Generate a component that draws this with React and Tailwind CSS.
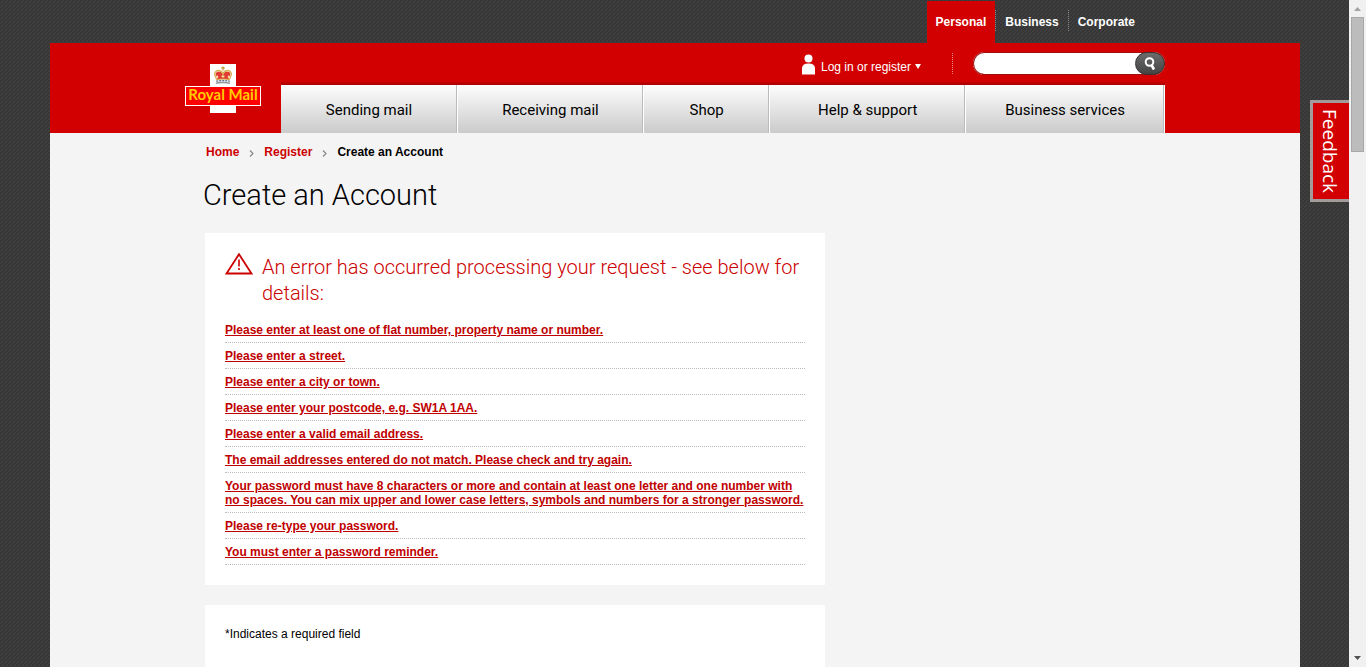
import React from "react";

const sites = [
  { name: "Personal", active: true },
  { name: "Business" },
  { name: "Corporate" },
];

const sections = [
  { name: "Sending mail", size: "grow-[177]" },
  { name: "Receiving mail", size: "grow-[186]" },
  { name: "Shop", size: "grow-[126]" },
  { name: "Help & support", size: "grow-[196]" },
  { name: "Business services", size: "grow-[199]" },
];

const errors = [
  "Please enter at least one of flat number, property name or number.",
  "Please enter a street.",
  "Please enter a city or town.",
  "Please enter your postcode, e.g. SW1A 1AA.",
  "Please enter a valid email address.",
  "The email addresses entered do not match. Please check and try again.",
  "Your password must have 8 characters or more and contain at least one letter and one number with no spaces. You can mix upper and lower case letters, symbols and numbers for a stronger password.",
  "Please re-type your password.",
  "You must enter a password reminder.",
];

function Logo() {
  return (
    <svg width="76" height="49" viewBox="0 0 76 49" aria-label="Royal Mail" role="img">
      <rect x="25" y="0" width="26" height="49" fill="#fff" />
      <g>
        <path d="M38 2.500 V6.500 M36.300 4 H39.700" stroke="#c9973a" strokeWidth="1.300" />
        <path d="M31.500 15 L30.500 10 Q31 7.500 33.500 7.500 Q36 7.500 38 9.500 Q40 7.500 42.500 7.500 Q45 7.500 45.500 10 L44.500 15 Z" fill="#e23b34" />
        <path d="M31.500 15 L29.500 10.500 Q30 6.300 34 6.500 Q37.200 7 38 10 Q38.800 7 42 6.500 Q46 6.300 46.500 10.500 L44.500 15 M38 8 V14" fill="none" stroke="#dcb158" strokeWidth="1.300" />
        <path d="M31 12.800 H33.200 M32.100 11.500 V14.500 M36.500 12.300 H39.500 M42.800 12.800 H45 M43.900 11.500 V14.500" stroke="#f8e9b0" strokeWidth="1.200" />
        <path d="M31 15.800 Q38 14.200 45 15.800" fill="none" stroke="#d9a545" strokeWidth="1.200" />
        <path d="M31.300 17.300 Q38 15.700 44.700 17.300" fill="none" stroke="#5a6f96" strokeWidth="1.300" strokeDasharray="2 1" />
        <path d="M31 19.200 Q38 17.600 45 19.200" fill="none" stroke="#9a9da0" strokeWidth="1.600" />
      </g>
      <rect x="0.500" y="22.500" width="75" height="19" fill="#f00" stroke="#fff" />
      <text x="38" y="36" textAnchor="middle" fill="#fc0" className="font-['Lato',sans-serif] text-[15px] font-bold">
        Royal Mail
      </text>
    </svg>
  );
}

function TopBar() {
  return (
    <nav aria-label="Sites" className="mx-auto flex h-[43px] max-w-[980px] justify-end pt-px pr-[21px] text-xs font-bold text-white">
      {sites.map((s, i) => (
        <div key={s.name} className={s.active ? "flex bg-[#d20000]" : "flex"}>
          {i > 0 && <span className="mt-[9px] h-[21px] border-l border-dotted border-[#8a8a8a]" />}
          <a href="#" className="px-[9px] pt-[13px] leading-4">{s.name}</a>
        </div>
      ))}
    </nav>
  );
}

function Utilities() {
  return (
    <div className="flex h-[42px] items-start justify-end bg-[linear-gradient(to_top,#a80000,#d20000_4px)] pt-[9px]">
      <a href="#" className="mt-px flex items-center text-xs leading-4 text-white">
        <svg width="13" height="21" viewBox="0 0 13 21" fill="#fff" className="mr-1.5">
          <circle cx="6.500" cy="4.500" r="4" />
          <path d="M0 20.500 V14.500 Q0 9.500 6.500 9.500 Q13 9.500 13 14.500 V20.500 Z" />
        </svg>
        <span className="mt-1.5">Log in or register</span>
        <svg width="6" height="5" viewBox="0 0 6 5" fill="#fff" className="mt-1 ml-1">
          <path d="M0 0 H6 L3 5 Z" />
        </svg>
      </a>
      <span className="mr-5 ml-[31px] mt-px h-[21px] border-l border-dotted border-[#e88]" />
      <form className="flex h-[23px] w-48 overflow-hidden rounded-full bg-white shadow-[inset_0_0_0_1px_#a01010]">
        <input aria-label="Search" type="text" className="min-w-0 grow bg-transparent px-3 text-xs outline-none" />
        <button type="button" aria-label="Search" className="flex w-[30px] shrink-0 items-center justify-center rounded-full border border-[#3a3030] bg-linear-to-b from-[#6c6c6c] to-[#444]">
          <svg width="12" height="14" viewBox="0 0 12 14" fill="none" stroke="#fff" strokeWidth="2">
            <circle cx="5.500" cy="5" r="3.800" />
            <path d="M7.500 8 L10 12.500" strokeWidth="2.600" />
          </svg>
        </button>
      </form>
    </div>
  );
}

function Header() {
  return (
    <header className="bg-[#d20000]">
      <div className="mx-auto flex max-w-[980px]">
        <a href="#" className="mt-[21px] mr-5 shrink-0"><Logo /></a>
        <div className="grow">
          <Utilities />
          <nav aria-label="Main" className="flex h-12">
            {sections.map((s) => (
              <a
                key={s.name}
                href="#"
                className={`${s.size} flex basis-0 items-center justify-center border-r border-white bg-linear-to-b from-[#fdfdfd] to-[#cbcbcb] pt-[3px] font-['Roboto',sans-serif] text-[15px] text-black shadow-[inset_-1px_0_0_#bbb]`}
              >
                {s.name}
              </a>
            ))}
          </nav>
        </div>
      </div>
    </header>
  );
}

function Breadcrumb() {
  const chevron = (
    <svg width="5" height="7" viewBox="0 0 5 7" fill="none" stroke="#888" strokeWidth="1.200" className="mt-0.5">
      <path d="M1 0.500 L4 3.500 L1 6.500" />
    </svg>
  );
  return (
    <nav aria-label="Breadcrumb" className="flex items-center gap-2.5 pl-[21px] pt-[11px] text-xs leading-4 font-bold">
      <a href="#" className="text-[#cc0000]">Home</a>
      {chevron}
      <a href="#" className="text-[#cc0000]">Register</a>
      {chevron}
      <span>Create an Account</span>
    </nav>
  );
}

function ErrorPanel() {
  return (
    <section className="bg-white p-5">
      <div className="flex gap-[9px] text-[#cc0000]">
        <svg width="28" height="22" viewBox="0 0 28 22" fill="none" stroke="#c00" className="shrink-0">
          <path d="M14 1.200 L26.500 20.500 H1.500 Z" strokeWidth="1.800" />
          <path d="M14 6.500 V13.500 M14 15 V17" strokeWidth="1.600" />
        </svg>
        <h2 className="pt-px font-['Roboto',sans-serif] text-[20px] leading-[26px] font-light">
          An error has occurred processing your request - see below for details:
        </h2>
      </div>
      <ul className="mt-[11px] text-xs leading-[14px] font-bold">
        {errors.map((e) => (
          <li key={e} className="border-b border-dotted border-[#bbb] pt-1.5 pb-[5px]">
            <a href="#" className="text-[#c00000] underline">{e}</a>
          </li>
        ))}
      </ul>
    </section>
  );
}

function Scrollbar() {
  return (
    <div aria-hidden="true" className="flex w-[17px] shrink-0 flex-col items-center bg-[#f1f1f1]">
      <svg width="7" height="4" viewBox="0 0 7 4" fill="#a3a3a3" className="mt-[7px]">
        <path d="M3.500 0 L7 4 H0 Z" />
      </svg>
      <div className="mt-1.5 h-[135px] w-[13px] border border-[#a8a8a8] bg-[#bcbcbc]" />
      <svg width="7" height="4" viewBox="0 0 7 4" fill="#505050" className="mt-auto mb-[7px]">
        <path d="M0 0 H7 L3.500 4 Z" />
      </svg>
    </div>
  );
}

export default function App() {
  return (
    <div className="flex h-screen overflow-hidden bg-[#393939] bg-[linear-gradient(135deg,#363636_25%,#404040_50%,#363636_75%)] bg-[length:4px_4px] font-['Liberation_Sans',Arial,sans-serif] text-black">
      <div className="relative min-w-0 grow overflow-hidden pl-px">
        <div className="mx-auto max-w-[1250px]">
          <TopBar />
          <Header />
          <main className="min-h-screen bg-[#f4f4f4]">
            <div className="mx-auto max-w-[980px]">
              <Breadcrumb />
              <h1 className="mt-[15px] pl-[18px] font-['Roboto',sans-serif] text-[29px] leading-10 font-light">Create an Account</h1>
              <div className="mt-[18px] ml-5 flex max-w-[620px] flex-col gap-5">
                <ErrorPanel />
                <section className="bg-white p-5 pb-40 text-xs leading-[18px]">
                  <p>*Indicates a required field</p>
                </section>
              </div>
            </div>
          </main>
        </div>
        <button type="button" className="absolute top-[100px] right-0 flex h-[102px] w-[39px] items-center justify-center border-[3px] border-r-0 border-[#a39a9a] bg-[#d20000] pr-0.5 font-['Open_Sans',sans-serif] text-[19px] leading-6 font-medium text-white [writing-mode:vertical-rl]">
          Feedback
        </button>
      </div>
      <Scrollbar />
    </div>
  );
}
